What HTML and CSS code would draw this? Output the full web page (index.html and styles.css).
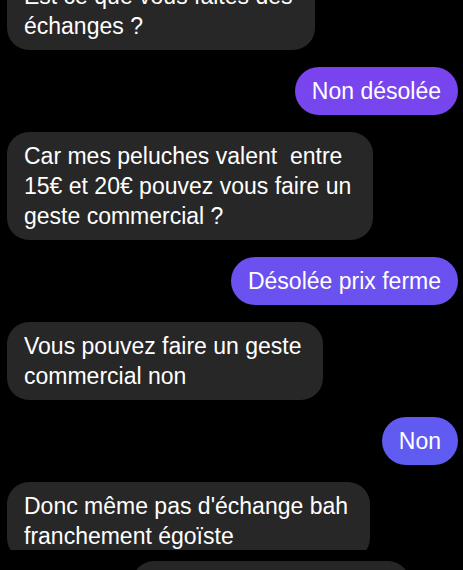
FILE: index.html
```html
<!DOCTYPE html>
<html lang="fr">
<head>
  <meta charset="UTF-8" />
  <title>Messages</title>
  <link rel="stylesheet" href="styles.css">
</head>
<body>

<div class="thread">
  <div class="msg received">Est ce que vous faites des<br>échanges ?</div>
  <div class="msg sent">Non désolée</div>
  <div class="msg received">Car mes peluches valent &nbsp;entre<br>15€ et 20€ pouvez vous faire un<br>geste commercial ?</div>
  <div class="msg sent">Désolée prix ferme</div>
  <div class="msg received">Vous pouvez faire un geste<br>commercial non</div>
  <div class="msg sent">Non</div>
  <div class="msg received">Donc même pas d'échange bah<br>franchement égoïste</div>
</div>

<div class="composer">
  <div class="composer-field"></div>
</div>

</body>
</html>
```

FILE: styles.css
```css
body {
  margin: 0;
  background: #000;
  font-family: "Liberation Sans", Arial, sans-serif;
  height: 570px;
  overflow: hidden;
}

.thread {
  display: flex;
  flex-direction: column;
  gap: 17px;
  margin-top: -28px;
  padding: 0 5px 0 7px;
}

.msg {
  width: fit-content;
  padding: 9px 17px;
  font-size: 23px;
  line-height: 30px;
  color: #fff;
  white-space: nowrap;
}

.received {
  padding-right: 22px;
  background: #272727;
  border-radius: 22px;
}

.sent {
  align-self: flex-end;
  border-radius: 24px;
  background: linear-gradient(to bottom, #7e3fee 0, #5763f2 570px) fixed;
}

.composer {
  position: fixed;
  left: 0;
  right: 0;
  bottom: 0;
  height: 20px;
  background: #000;
  overflow: hidden;
}

.composer-field {
  margin: 11px 0 0 132px;
  width: 278px;
  height: 44px;
  border-radius: 22px;
  background: #262626;
}
```
